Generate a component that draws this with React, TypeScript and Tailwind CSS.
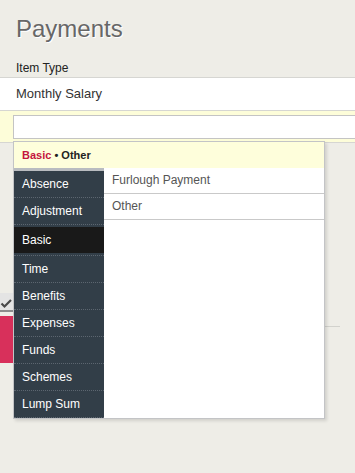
import React from "react";

const groups = [
  "Absence",
  "Adjustment",
  "Basic",
  "Time",
  "Benefits",
  "Expenses",
  "Funds",
  "Schemes",
  "Lump Sum",
];

const items = ["Furlough Payment", "Other"];

export default function App() {
  return (
    <div className="relative min-h-[473px] w-full overflow-hidden bg-[#eeede7] font-['Liberation_Sans',Arial,sans-serif]">
      <h1 className="pl-4 pt-[15px] text-[24px] leading-[28px] text-[#676767] [text-shadow:1px_1px_0_#fff]">
        Payments
      </h1>
      <div className="mt-[17px] pl-4 text-[12px] leading-[16px] text-[#222]">
        Item Type
      </div>

      <div className="mt-[1px] h-[34px] border-y border-[#d6d6d2] bg-white pl-4 text-[13px] leading-[32px] text-[#333]">
        Monthly Salary
      </div>

      <div className="h-[32px] border-b border-[#d6d6d2] bg-[#fdfdd9] pl-[13px] pt-[4px]">
        <input
          type="text"
          className="h-[24px] w-[400px] border border-[#c4c4c4] bg-white outline-none"
        />
      </div>

      {/* page content behind the dropdown */}
      <div className="mt-[150px] h-[19px] w-[13px] border-b-2 border-[#8c8c8c] bg-[#e4e4e4] pt-[5px]">
        <svg width="13" height="11" viewBox="0 0 13 11">
          <path
            d="M1.5 5.5 L4.5 8.5 L11 2"
            fill="none"
            stroke="#4a4a4a"
            strokeWidth="2.2"
          />
        </svg>
      </div>
      <div className="mt-[4px] flex items-start">
        <div className="h-[47px] w-[13px] bg-[#d8305b]" />
        <div className="ml-[1px] mt-[10px] w-[326px] border-t border-[#d2d2cd]" />
      </div>

      {/* dropdown */}
      <div className="absolute left-[13px] top-[141px] flex h-[278px] w-[312px] flex-col border border-[#c3c4c6] bg-white shadow-[2px_2px_3px_rgba(0,0,0,0.12)]">
        <div className="h-[26px] shrink-0 bg-[#fefedb] pl-[8px] text-[11px] font-bold leading-[26px]">
          <span className="text-[#c4143e]">Basic</span>
          <span className="text-[#222]"> • Other</span>
        </div>
        <div className="flex flex-1">
          <div className="w-[90px] border-t-[3px] border-[#b9bcc0] bg-[#323e48]">
            {groups.map((g) =>
              g === "Basic" ? (
                <div
                  key={g}
                  className="h-[31px] border-b border-dotted border-[#5c6670] py-[2px]"
                >
                  <div className="h-[26px] bg-[#191919] pl-[8px] text-[12px] leading-[26px] text-white">
                    {g}
                  </div>
                </div>
              ) : (
                <div
                  key={g}
                  className="h-[27px] border-b border-dotted border-[#5c6670] pl-[8px] text-[12px] leading-[26px] text-white"
                >
                  {g}
                </div>
              )
            )}
          </div>
          <div className="flex-1">
            {items.map((i) => (
              <div
                key={i}
                className="h-[26px] border-b border-[#c9c9c9] pl-[8px] text-[12px] leading-[25px] text-[#555]"
              >
                {i}
              </div>
            ))}
          </div>
        </div>
      </div>
    </div>
  );
}
